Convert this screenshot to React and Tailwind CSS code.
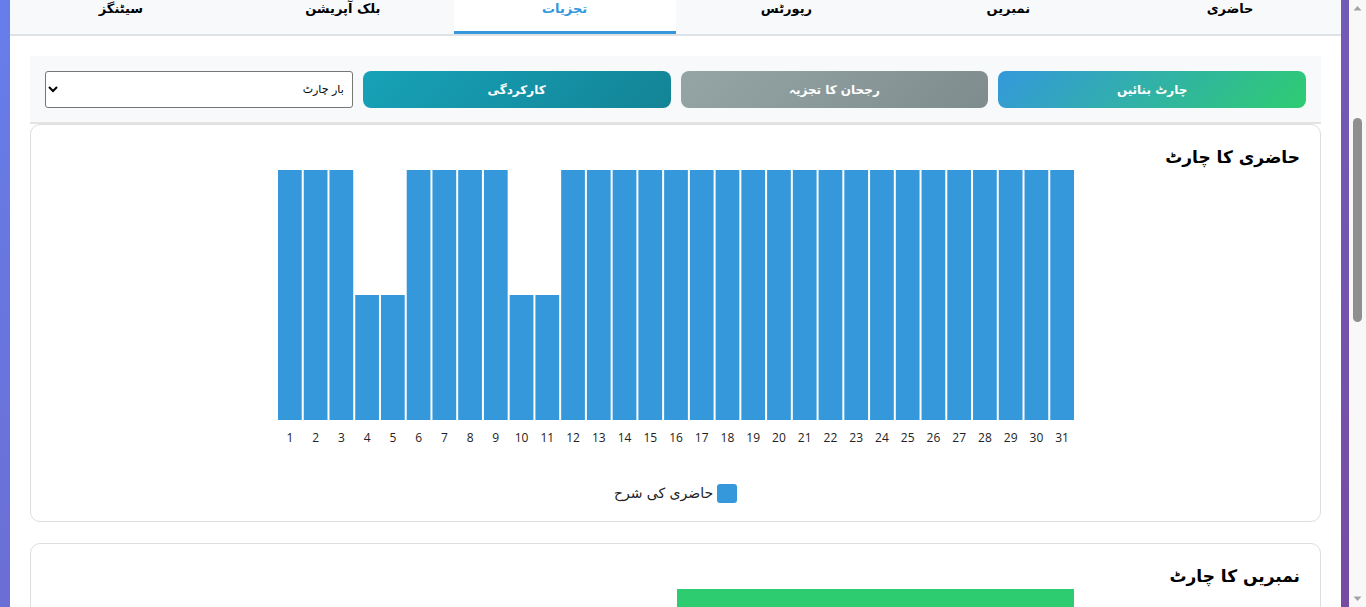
import { useLayoutEffect, useRef } from 'react';

const font = { fontFamily: '"DejaVu Sans", "Noto Sans", sans-serif' };

const tabs = ['حاضری', 'نمبریں', 'رپورٹس', 'تجزیات', 'بلک آپریشن', 'سیٹنگز'];

const attendance = Array.from({ length: 31 }, (_, i) => ({
  day: i + 1,
  value: [4, 5, 10, 11].includes(i + 1) ? 50 : 100,
}));

function BarChart({ data, colors, height = 250, labelGap = 22 }) {
  const width = 800;
  const step = (width - 2) / data.length;
  return (
    <svg width={width} height={height + 40} className="block">
      {data.map((d, i) => {
        const h = (d.value / 100) * height;
        return (
          <g key={i}>
            <rect
              x={1 + i * step + 1}
              y={height - h}
              width={step - 2}
              height={h}
              fill={colors[i % colors.length]}
            />
            <text
              x={1 + i * step + step / 2}
              y={height + labelGap}
              textAnchor="middle"
              fontSize="12"
              fill="#222"
              style={{ fontFamily: '"Open Sans", sans-serif' }}
            >
              {d.label ?? d.day}
            </text>
          </g>
        );
      })}
    </svg>
  );
}

function ChartCard({ title, children }) {
  return (
    <div className="rounded-[10px] border border-[#dedede] bg-white px-5 pt-5 pb-[18px]">
      <h3 className="text-[17px] leading-[25px] font-bold text-black">{title}</h3>
      {children}
    </div>
  );
}

function Scrollbar() {
  return (
    <div className="fixed top-0 right-0 flex h-screen w-[17px] flex-col items-center bg-[#f8f8f8]">
      <svg width="17" height="17" className="block">
        <path d="M4.5 10.5 L8.5 6 L12.5 10.5 Z" fill="#a3a3a3" />
      </svg>
      <div className="mt-[101px] h-[204px] w-[9px] rounded-full bg-[#8f8f8f]" />
      <div className="flex-1" />
      <svg width="17" height="17" className="block">
        <path d="M4.5 6.5 L8.5 11 L12.5 6.5 Z" fill="#a3a3a3" />
      </svg>
    </div>
  );
}

export default function App() {
  const scroller = useRef(null);
  const tabBar = useRef(null);

  useLayoutEffect(() => {
    const s = scroller.current;
    const t = tabBar.current;
    if (!s || !t) return;
    const offset = t.getBoundingClientRect().bottom - s.getBoundingClientRect().top;
    s.scrollTop = offset - 36;
  }, []);

  return (
    <div
      ref={scroller}
      dir="rtl"
      style={font}
      className="h-screen overflow-y-scroll bg-[linear-gradient(135deg,#667eea_0%,#764ba2_100%)] pt-5 pb-5 pr-[25px] pl-[10px]"
    >
      <div className="bg-white">
        <header className="h-[264px] bg-[linear-gradient(135deg,#3498db,#2c3e50)] flex flex-col items-center justify-center gap-3 text-white">
          <h1 className="text-3xl font-bold">طلباء کا انتظامی نظام</h1>
          <p className="text-base">حاضری، نمبریں اور رپورٹس ایک جگہ پر</p>
        </header>

        <nav ref={tabBar} className="flex border-b-2 border-[#dee2e6] bg-[#f8f9fa]">
          {tabs.map((t) => (
            <div
              key={t}
              className={
                t === 'تجزیات'
                  ? 'flex-1 border-b-[3px] border-[#3498db] bg-white pt-[15px] pb-[12px] text-center text-[13px] leading-[20px] font-bold text-[#3498db]'
                  : 'flex-1 border-b-[3px] border-transparent pt-[15px] pb-[12px] text-center text-[13px] leading-[20px] font-bold text-black'
              }
            >
              {t}
            </div>
          ))}
        </nav>

        <div className="px-5 pt-5 pb-5">
          <div className="grid grid-cols-4 gap-[10px] border-b-2 border-[#e3e3e3] bg-[#f8f9fa] p-[15px] pb-[14px]">
            <button className="h-[37px] rounded-lg bg-[linear-gradient(135deg,#3498db,#2ecc71)] text-[12px] font-bold text-white">
              چارٹ بنائیں
            </button>
            <button className="h-[37px] rounded-lg bg-[linear-gradient(135deg,#95a5a6,#7f8c8d)] text-[12px] font-bold text-white">
              رجحان کا تجزیہ
            </button>
            <button className="h-[37px] rounded-lg bg-[linear-gradient(135deg,#17a2b8,#138496)] text-[12px] font-bold text-white">
              کارکردگی
            </button>
            <select className="h-[37px] rounded-[3px] border border-[#767676] bg-white px-1 text-[11px] text-black">
              <option>بار چارٹ</option>
              <option>لائن چارٹ</option>
              <option>پائی چارٹ</option>
            </select>
          </div>

          <div className="flex flex-col gap-[21px]">
            <ChartCard title="حاضری کا چارٹ">
              <div className="flex justify-center">
                <BarChart data={attendance} colors={['#3498db']} />
              </div>
              <div className="mt-[23px] flex items-center justify-center gap-1">
                <span className="h-[19px] w-5 rounded-[3px] bg-[#3498db]" />
                <span className="text-[14px] leading-[20px] text-[#222]">حاضری کی شرح</span>
              </div>
            </ChartCard>

            <ChartCard title="نمبریں کا چارٹ">
              <div className="flex justify-center">
                <BarChart
                  data={[
                    { label: 'اردو', value: 70 },
                    { label: 'ریاضی', value: 100 },
                  ]}
                  colors={['#e67e22', '#2ecc71']}
                />
              </div>
              <div className="mt-[23px] flex items-center justify-center gap-1">
                <span className="h-[19px] w-5 rounded-[3px] bg-[#2ecc71]" />
                <span className="text-[14px] leading-[20px] text-[#222]">اوسط نمبریں</span>
              </div>
            </ChartCard>

            <ChartCard title="کارکردگی کا خلاصہ">
              <div className="h-[310px]" />
            </ChartCard>
          </div>
        </div>
      </div>
      <Scrollbar />
    </div>
  );
}
